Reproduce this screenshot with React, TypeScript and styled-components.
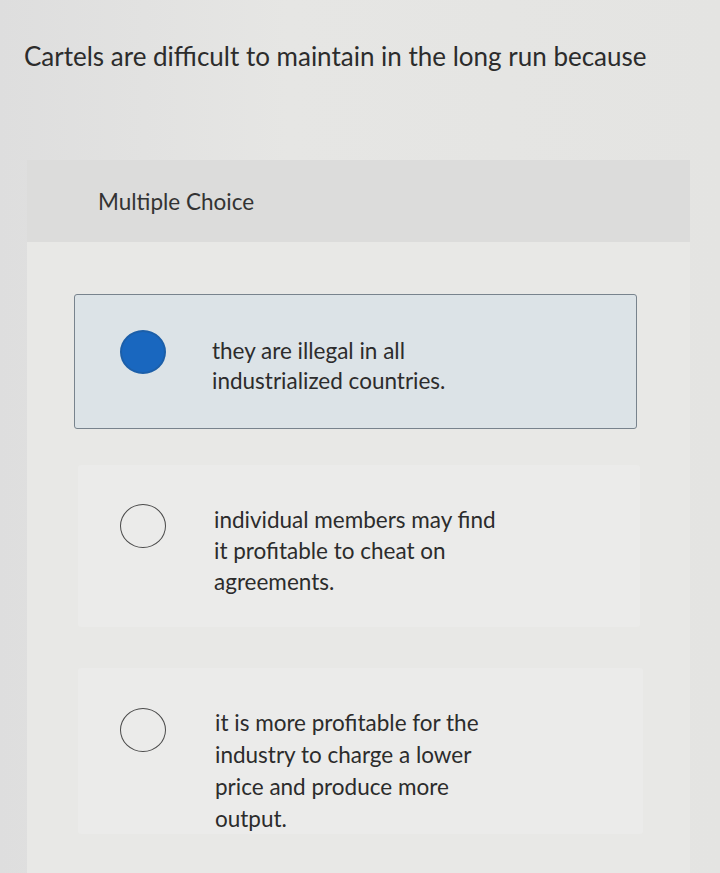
import React from "react";
import styled, { createGlobalStyle } from "styled-components";

const GlobalStyle = createGlobalStyle`
  html, body {
    margin: 0;
    padding: 0;
    background: #e3e3e1;
  }
  body {
    font-family: Lato, "Open Sans", "Liberation Sans", sans-serif;
    color: #2a2a2a;
  }
`;

const Page = styled.div`
  width: 720px;
  height: 873px;
  overflow: hidden;
  background: linear-gradient(90deg, #dedede 0%, #e6e6e4 40%, #e4e4e2 100%);
  padding-top: 38px;
  box-sizing: border-box;
`;

const Question = styled.h1`
  margin: 0 0 0 24px;
  font-size: 26px;
  font-weight: 400;
  line-height: 36px;
  color: #2c2c2c;
`;

const Panel = styled.section`
  margin: 86px 30px 0 27px;
  height: 720px;
  background: #e8e8e6;
`;

const PanelHead = styled.div`
  height: 82px;
  background: #dcdcdb;
  display: flex;
  align-items: center;
  padding-left: 71px;
  font-size: 22.5px;
  color: #333;
`;

const Options = styled.div`
  display: flex;
  flex-direction: column;
  padding: 52px 50px 0 47px;
`;

const Option = styled.div<{ $selected?: boolean; $h: number; $gap: number; $inset: number; $right: number }>`
  display: flex;
  height: ${(p) => p.$h}px;
  margin-top: ${(p) => p.$gap}px;
  margin-left: ${(p) => p.$inset}px;
  margin-right: ${(p) => p.$right}px;
  box-sizing: border-box;
  background: ${(p) => (p.$selected ? "#dce3e7" : "#ebebea")};
  border: ${(p) => (p.$selected ? "1.5px solid #78838d" : "1px solid transparent")};
  border-radius: 3px;
`;

const Row = styled.div<{ $top: number; $left: number }>`
  display: flex;
  align-items: flex-start;
  padding-top: ${(p) => p.$top}px;
  padding-left: ${(p) => p.$left}px;
`;

const Radio = styled.span<{ $checked?: boolean }>`
  flex: none;
  width: 46px;
  height: 44px;
  border-radius: 50%;
  box-sizing: border-box;
  background: ${(p) => (p.$checked ? "#1967bf" : "transparent")};
  border: ${(p) => (p.$checked ? "2px solid #1c5fa9" : "1.5px solid #4a4a4a")};
`;

const Spacer = styled.span<{ $w: number }>`
  flex: none;
  width: ${(p) => p.$w}px;
`;

const Label = styled.div<{ $lh: number; $shift: number }>`
  width: 296px;
  font-size: 22.5px;
  line-height: ${(p) => p.$lh}px;
  color: #2c2c2c;
  margin-top: ${(p) => p.$shift}px;
`;

const choices = [
  { text: "they are illegal in all industrialized countries.", selected: true, h: 135, top: 35, gap: 0, inset: 0, right: 3, left: 45, gutter: 46, shift: 6, lh: 30 },
  { text: "individual members may find it profitable to cheat on agreements.", selected: false, h: 162, top: 38, gap: 36, inset: 4, right: 0, left: 41, gutter: 48, shift: 0, lh: 31 },
  { text: "it is more profitable for the industry to charge a lower price and produce more output.", selected: false, h: 166, top: 39, gap: 41, inset: 4, right: -3, left: 41, gutter: 49, shift: -1, lh: 32 },
];

export default function App() {
  return (
    <>
      <GlobalStyle />
      <Page>
        <Question>Cartels are difficult to maintain in the long run because</Question>
        <Panel>
          <PanelHead>Multiple Choice</PanelHead>
          <Options>
            {choices.map((c, i) => (
              <Option key={i} $selected={c.selected} $h={c.h} $gap={c.gap} $inset={c.inset} $right={c.right}>
                <Row $top={c.top} $left={c.left}>
                  <Radio $checked={c.selected} />
                  <Spacer $w={c.gutter} />
                  <Label $lh={c.lh} $shift={c.shift}>{c.text}</Label>
                </Row>
              </Option>
            ))}
          </Options>
        </Panel>
      </Page>
    </>
  );
}
